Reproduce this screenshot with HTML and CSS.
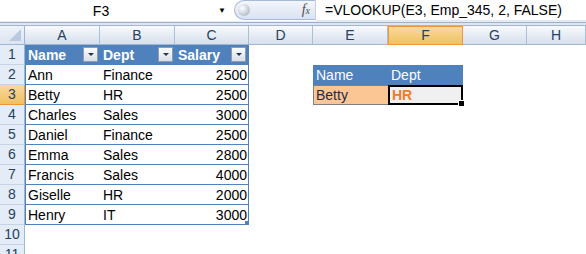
FILE: index.html
```html
<html lang="en">
<head>
  <meta charset="UTF-8">
  <title>VLOOKUP</title>
  <link rel="stylesheet" href="styles.css">
</head>
<body>
  <div class="formula-bar">
    <div class="name-box">
      <span class="name-text">F3</span>
      <span class="drop">&#9660;</span>
    </div>
    <div class="fx-box">
      <span class="knob"></span>
      <span class="fx">f<sub>x</sub></span>
    </div>
    <div class="formula">=VLOOKUP(E3, Emp_345, 2, FALSE)</div>
  </div>
  <div class="bar-sep"></div>

  <div class="sheet">
    <div class="corner"><span class="tri"></span></div>
    <div class="ch">A</div>
    <div class="ch">B</div>
    <div class="ch">C</div>
    <div class="ch">D</div>
    <div class="ch">E</div>
    <div class="ch active">F</div>
    <div class="ch">G</div>
    <div class="ch">H</div>

    <div class="rh">1</div>
    <div class="th first">Name<span class="filter"></span></div>
    <div class="th">Dept<span class="filter"></span></div>
    <div class="th last">Salary<span class="filter"></span></div>
    <div class="c wide"></div>

    <div class="rh">2</div>
    <div class="td first">Ann</div>
    <div class="td">Finance</div>
    <div class="td num last">2500</div>
    <div class="c"></div>
    <div class="lh">Name</div>
    <div class="lh">Dept</div>
    <div class="c"></div>
    <div class="c"></div>

    <div class="rh active">3</div>
    <div class="td first">Betty</div>
    <div class="td">HR</div>
    <div class="td num last">2500</div>
    <div class="c"></div>
    <div class="lv">Betty</div>
    <div class="sel">HR<span class="handle"></span></div>
    <div class="c"></div>
    <div class="c"></div>

    <div class="rh">4</div>
    <div class="td first">Charles</div>
    <div class="td">Sales</div>
    <div class="td num last">3000</div>
    <div class="c wide"></div>

    <div class="rh">5</div>
    <div class="td first">Daniel</div>
    <div class="td">Finance</div>
    <div class="td num last">2500</div>
    <div class="c wide"></div>

    <div class="rh">6</div>
    <div class="td first">Emma</div>
    <div class="td">Sales</div>
    <div class="td num last">2800</div>
    <div class="c wide"></div>

    <div class="rh">7</div>
    <div class="td first">Francis</div>
    <div class="td">Sales</div>
    <div class="td num last">4000</div>
    <div class="c wide"></div>

    <div class="rh">8</div>
    <div class="td first">Giselle</div>
    <div class="td">HR</div>
    <div class="td num last">2000</div>
    <div class="c wide"></div>

    <div class="rh">9</div>
    <div class="td first">Henry</div>
    <div class="td">IT</div>
    <div class="td num last">3000<span class="resize"></span></div>
    <div class="c wide"></div>

    <div class="rh">10</div>
    <div class="c full"></div>

    <div class="rh">11</div>
    <div class="c full"></div>
  </div>
</body>
</html>
```

FILE: styles.css
```css
body {
  margin: 0;
  background: #ffffff;
  font-family: "Liberation Sans", Arial, sans-serif;
  font-size: 14px;
  color: #000000;
  overflow: hidden;
}

.formula-bar {
  display: flex;
  height: 21px;
  background: #ffffff;
}

.name-box {
  width: 230px;
  display: flex;
  align-items: center;
}

.name-text {
  flex: 1;
  text-align: center;
  margin-right: 16px;
}

.drop {
  font-size: 8px;
  margin-right: 4px;
}

.fx-box {
  width: 82px;
  margin-left: 4px;
  height: 20px;
  border-radius: 11px 0 0 11px;
  background: linear-gradient(#f3f6fb, #d9e3f1);
  border: 1px solid #a7bad5;
  border-right: 1px solid #c5d2e4;
  display: flex;
  align-items: center;
  justify-content: space-between;
  box-sizing: border-box;
}

.knob {
  width: 12px;
  height: 12px;
  margin-left: 3px;
  border-radius: 50%;
  background: radial-gradient(circle at 35% 35%, #ffffff, #b9c3cf 70%, #8d99a8);
}

.fx {
  font-family: "Liberation Serif", serif;
  font-style: italic;
  font-size: 14px;
  color: #4d4d4d;
  margin-right: 5px;
}

.fx sub {
  font-size: 10px;
  vertical-align: 0;
}

.formula {
  flex: 1;
  padding-left: 9px;
  line-height: 21px;
  border-bottom: 1px solid #dfe6f0;
}

.bar-sep {
  height: 5px;
  background: linear-gradient(#e7edf6 0, #e7edf6 1px, #9eb0c8 1px, #9eb0c8 2px, #dfe6f1 2px, #dfe6f1 4px, #a4b6ce 4px);
}

.sheet {
  display: grid;
  grid-template-columns: 25px 75px 75px 74px 64px 75px 75px 64px 1fr;
  grid-template-rows: 19px repeat(11, 20px);
}

.corner {
  background: linear-gradient(#eef3fa, #dbe4f1);
  border-right: 1px solid #9eb6ce;
  border-bottom: 1px solid #9eb6ce;
  position: relative;
}

.tri {
  position: absolute;
  right: 3px;
  bottom: 3px;
  width: 0;
  height: 0;
  border-left: 12px solid transparent;
  border-bottom: 12px solid #b8c9e0;
}

.ch {
  background: linear-gradient(#f8fafd, #e5ebf4 55%, #d7e0ee);
  border-right: 1px solid #a9bfd6;
  border-bottom: 1px solid #9eb6ce;
  text-align: center;
  line-height: 18px;
  color: #27415f;
}

.ch.active {
  background: linear-gradient(#f9d99f, #f1c15f);
  border: 1px solid #f29536;
  line-height: 17px;
}

.rh {
  background: #e4ecf7;
  border-right: 1px solid #9eb6ce;
  border-bottom: 1px solid #c5d3e4;
  text-align: center;
  line-height: 19px;
  color: #27415f;
}

.rh.active {
  background: linear-gradient(#f9d99f, #f1c15f);
  border-right: 1px solid #f29536;
  border-bottom: 1px solid #f29536;
}

.c {
  background: #ffffff;
}

.c.wide {
  grid-column: span 5;
}

.c.full {
  grid-column: span 8;
}

.th {
  background: #4f81bd;
  color: #ffffff;
  font-weight: bold;
  line-height: 20px;
  padding-left: 3px;
  position: relative;
}

.filter {
  position: absolute;
  right: 2px;
  top: 2px;
  width: 15px;
  height: 15px;
  box-sizing: border-box;
  border: 1px solid #8e9db1;
  background: linear-gradient(#fbfcfd, #d9dfe7);
}

.filter::after {
  content: "";
  position: absolute;
  left: 4px;
  top: 5px;
  border-left: 3px solid transparent;
  border-right: 3px solid transparent;
  border-top: 3px solid #1f3552;
}

.td {
  border-bottom: 1px solid #4f81bd;
  line-height: 20px;
  padding-left: 3px;
  position: relative;
}

.td.first {
  border-left: 1px solid #4f81bd;
  padding-left: 2px;
}

.th.last, .td.last {
  border-right: 1px solid #4f81bd;
}

.num {
  text-align: right;
  padding-right: 1px;
}

.resize {
  position: absolute;
  right: -1px;
  bottom: -1px;
  width: 4px;
  height: 4px;
  background: #4f81bd;
}

.lh {
  background: #4f81bd;
  color: #ffffff;
  line-height: 20px;
  padding-left: 3px;
}

.lv {
  background: #fbc594;
  color: #1f2a44;
  border: 1px solid #7f7f7f;
  border-right: none;
  line-height: 18px;
  padding-left: 2px;
}

.sel {
  background: #f0f0f0;
  color: #f47a1f;
  font-weight: bold;
  border: 2px solid #000000;
  line-height: 16px;
  padding-left: 2px;
  position: relative;
}

.handle {
  position: absolute;
  right: -4px;
  bottom: -4px;
  width: 5px;
  height: 5px;
  background: #000000;
  border: 1px solid #ffffff;
}
```
